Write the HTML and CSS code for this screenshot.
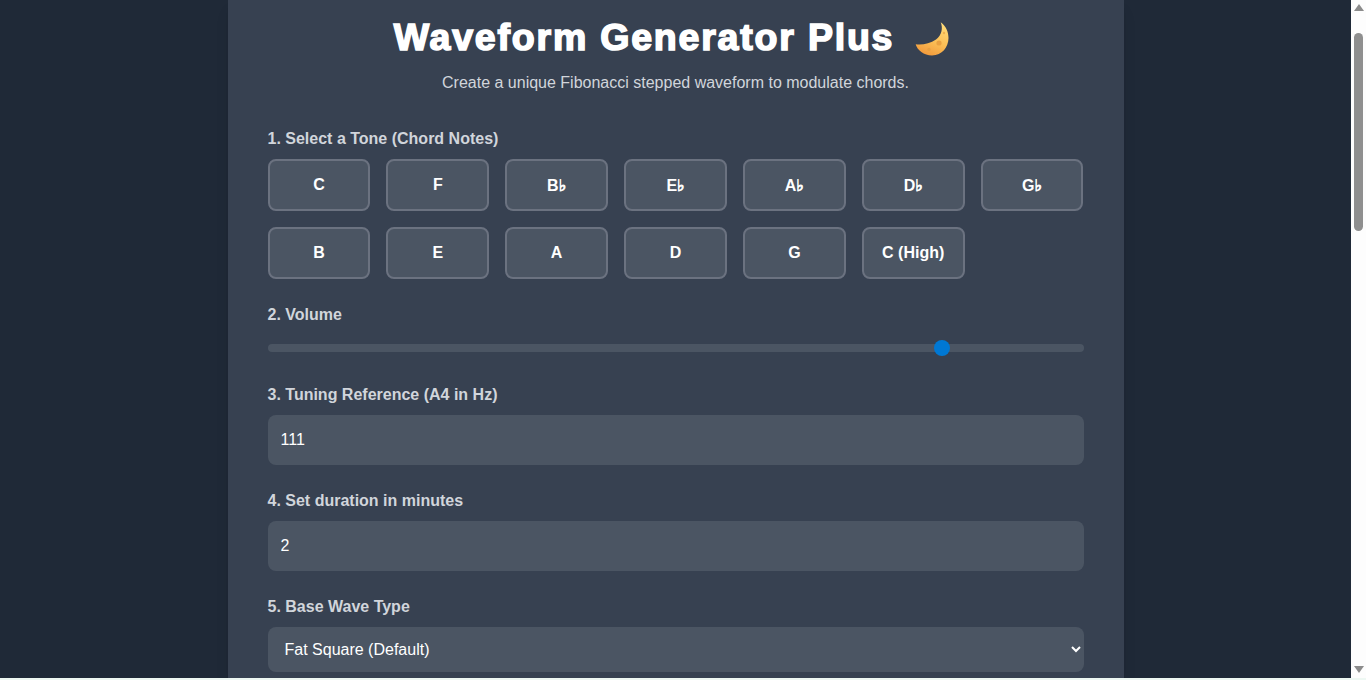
FILE: index.html
```html
<!DOCTYPE html>
<html lang="en">
<head>
    <meta charset="UTF-8">
    <title>Waveform Generator Plus</title>
    <link rel="stylesheet" href="styles.css">
</head>
<body>
<div class="window">
    <div class="page">
        <div class="card">
            <div class="head">
                <h1>Waveform Generator Plus</h1>
                <svg class="moon" width="36" height="36" viewBox="0 0 36 36">
                    <defs>
                        <linearGradient id="moonFill" x1="0.75" y1="0" x2="0.35" y2="1">
                            <stop offset="0" stop-color="#ffdc7a"/>
                            <stop offset="0.55" stop-color="#fbbf56"/>
                            <stop offset="1" stop-color="#f29a3c"/>
                        </linearGradient>
                    </defs>
                    <path fill="url(#moonFill)" d="M26.7 2.3C29 8 28 15 22 19.5C16 24 8 25 1.7 24.3C3 30 10 35.5 18 35.5C28 35.5 34.5 27 34.5 18C34.5 12 32 6 26.7 2.3Z"/>
                    <circle cx="25" cy="23" r="2.6" fill="#e9a142"/>
                    <circle cx="15" cy="29.5" r="1.7" fill="#e9a142"/>
                    <circle cx="30" cy="13" r="1.2" fill="#eeb050"/>
                </svg>
            </div>
            <p class="intro">Create a unique Fibonacci stepped waveform to modulate chords.</p>

            <div class="field tones">
                <label>1. Select a Tone (Chord Notes)</label>
                <div class="tone-grid">
                    <button>C</button>
                    <button>F</button>
                    <button>B<span class="flat">♭</span></button>
                    <button>E<span class="flat">♭</span></button>
                    <button>A<span class="flat">♭</span></button>
                    <button>D<span class="flat">♭</span></button>
                    <button>G<span class="flat">♭</span></button>
                    <button>B</button>
                    <button>E</button>
                    <button>A</button>
                    <button>D</button>
                    <button>G</button>
                    <button>C (High)</button>
                </div>
            </div>

            <div class="field">
                <label>2. Volume</label>
                <input class="volume" type="range" min="0" max="1" step="0.0025" value="0.8325">
            </div>

            <div class="field">
                <label>3. Tuning Reference (A4 in Hz)</label>
                <input class="num" type="number" value="111">
            </div>

            <div class="field">
                <label>4. Set duration in minutes</label>
                <input class="num" type="number" value="2">
            </div>

            <div class="field">
                <label>5. Base Wave Type</label>
                <select class="wave">
                    <option>Fat Square (Default)</option>
                    <option>Sine</option>
                    <option>Triangle</option>
                </select>
            </div>
        </div>
    </div>
    <div class="scrollbar">
        <div class="arrow-up"></div>
        <div class="thumb"></div>
        <div class="arrow-down"></div>
    </div>
</div>
<div class="edge"></div>
</body>
</html>
```

FILE: styles.css
```css
* {
    padding: 0;
    margin: 0;
    box-sizing: border-box;
}

html, body {
    width: 100%;
    height: 680px;
    overflow: hidden;
}

body {
    background: #1f2937;
    font-family: "Liberation Sans", "DejaVu Sans", sans-serif;
    color: #fff;
}

.window {
    height: 678px;
    display: flex;
}

.edge {
    height: 2px;
    background: #eef8f3;
}

.page {
    flex: 1;
    display: flex;
    justify-content: center;
    overflow: hidden;
}

.card {
    width: 896px;
    height: 678px;
    padding: 16px 40px 0;
    background: #374151;
    box-shadow: 0 10px 15px -3px rgba(0, 0, 0, 0.1), 0 4px 6px -4px rgba(0, 0, 0, 0.1);
}

.head {
    display: flex;
    justify-content: center;
    align-items: center;
    gap: 20px;
    height: 40px;
}

h1 {
    font-size: 37.5px;
    line-height: 42px;
    height: 40px;
    font-weight: 700;
    letter-spacing: 1.8px;
    -webkit-text-stroke: 1.6px #fff;
}

.moon {
    margin-top: 4px;
    margin-right: 7px;
}

.intro {
    margin-top: 14px;
    height: 24px;
    font-size: 16px;
    line-height: 26px;
    color: #d1d5db;
    text-align: center;
}

.field {
    margin-top: 32px;
}

.field + .field {
    margin-top: 23px;
}

.field label {
    display: block;
    height: 24px;
    font-size: 16px;
    line-height: 26px;
    font-weight: 700;
    color: #d1d5db;
}

.tone-grid {
    display: grid;
    grid-template-columns: repeat(7, 1fr);
    gap: 16px;
    margin-top: 9px;
}

.tone-grid button {
    height: 52px;
    background: #4b5563;
    border: 2px solid #6b7280;
    border-radius: 8px;
    font-family: "Liberation Sans", "DejaVu Sans", sans-serif;
    font-size: 16px;
    font-weight: 700;
    color: #fff;
    cursor: pointer;
}

.flat {
    font-family: "DejaVu Sans", sans-serif;
    font-size: 16px;
    -webkit-text-stroke: 0.8px #fff;
}

.volume {
    display: block;
    width: 100%;
    height: 8px;
    margin-top: 18px;
    margin-bottom: 30px;
    background: #4b5563;
    border-radius: 8px;
    appearance: none;
    -webkit-appearance: none;
    outline: none;
}

.volume::-webkit-slider-thumb {
    -webkit-appearance: none;
    width: 16px;
    height: 16px;
    border-radius: 50%;
    background: #0078d4;
}

.num {
    display: block;
    width: 100%;
    height: 50px;
    margin-top: 9px;
    padding: 0 13px;
    background: #4b5563;
    border: none;
    border-radius: 8px;
    font-family: "Liberation Sans", sans-serif;
    font-size: 16px;
    color: #fff;
    outline: none;
    appearance: textfield;
    -moz-appearance: textfield;
}

.wave {
    display: block;
    width: 100%;
    height: 45px;
    margin-top: 9px;
    padding: 0 12px 0 13px;
    background-color: #4b5563;
    border: none;
    border-radius: 8px;
    font-family: "Liberation Sans", sans-serif;
    font-size: 16px;
    color: #fff;
    outline: none;
}

.scrollbar {
    width: 15px;
    background: #fdfdfd;
    display: flex;
    flex-direction: column;
    align-items: center;
    padding-top: 4px;
}

.arrow-up {
    border-left: 5px solid transparent;
    border-right: 5px solid transparent;
    border-bottom: 7px solid #8c8c8c;
}

.thumb {
    width: 9px;
    height: 198px;
    margin-top: 22px;
    background: #8f8f8f;
    border-radius: 5px;
}

.arrow-down {
    margin-top: auto;
    margin-bottom: 5px;
    border-left: 5px solid transparent;
    border-right: 5px solid transparent;
    border-top: 7px solid #8c8c8c;
}
```
